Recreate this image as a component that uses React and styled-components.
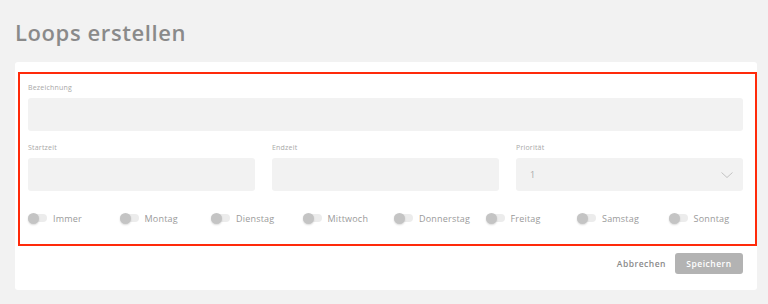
import React, { useState } from "react";
import styled, { createGlobalStyle } from "styled-components";

const GlobalStyle = createGlobalStyle`
  html, body {
    margin: 0;
    padding: 0;
    background: #f2f2f2;
  }
  body {
    font-family: "Open Sans", "Liberation Sans", sans-serif;
  }
`;

const Page = styled.div`
  width: 768px;
  height: 304px;
  padding: 18px 11px 0 15px;
  box-sizing: border-box;
`;

const Title = styled.h1`
  margin: 0 0 16px;
  font-size: 22px;
  line-height: 28px;
  font-weight: 600;
  color: #8a8a8a;
  letter-spacing: 0.6px;
`;

const Card = styled.section`
  background: #fff;
  border-radius: 3px;
  padding: 10px 0 16px 3px;
`;

const Form = styled.div`
  border: 2px solid #ff2a0a;
  padding: 9px 12px 20px 8px;
  display: flex;
  flex-direction: column;
`;

const Field = styled.div`
  display: flex;
  flex-direction: column;
`;

const Label = styled.label`
  font-size: 7px;
  line-height: 10px;
  color: #a8a8a8;
  margin-bottom: 5px;
  letter-spacing: 0.2px;
`;

const Input = styled.div`
  height: 33px;
  background: #f2f2f2;
  border-radius: 3px;
  display: flex;
  align-items: center;
  justify-content: space-between;
  padding: 0 10px 0 14px;
  font-size: 9px;
  color: #aaa;
`;

const Row = styled.div`
  display: grid;
  grid-template-columns: repeat(3, 1fr);
  column-gap: 17px;
  margin-top: 12px;
`;

const Days = styled.div`
  display: grid;
  grid-template-columns: repeat(8, 91.5px);
  margin-top: 21px;
`;

const Day = styled.div`
  display: flex;
  align-items: center;
  gap: 6px;
  height: 12px;
`;

const Track = styled.span`
  position: relative;
  width: 19px;
  height: 8px;
  border-radius: 4px;
  background: #ececec;
`;

const Knob = styled.span`
  position: absolute;
  left: 0;
  top: -1.5px;
  width: 11px;
  height: 11px;
  border-radius: 50%;
  background: #c4c4c4;
  box-shadow: 0 1px 2px rgba(0, 0, 0, 0.15);
`;

const DayLabel = styled.span`
  font-size: 9px;
  color: #9a9a9a;
  letter-spacing: 0.2px;
`;

const Footer = styled.div`
  display: flex;
  justify-content: flex-end;
  align-items: center;
  gap: 9px;
  margin-top: 7px;
  padding-right: 14px;
`;

const Cancel = styled.button`
  background: none;
  border: none;
  padding: 0;
  font-family: inherit;
  font-size: 8.5px;
  font-weight: 600;
  color: #8a8a8a;
  letter-spacing: 0.5px;
`;

const Save = styled.button`
  width: 68px;
  height: 21px;
  border: none;
  border-radius: 3px;
  background: #b3b3b3;
  color: #fff;
  font-family: inherit;
  font-size: 8.5px;
  font-weight: 600;
  letter-spacing: 0.5px;
`;

const Chevron = () => (
  <svg width="12" height="6" viewBox="0 0 12 6" fill="none">
    <path d="M0.5 0.5l5.5 5 5.5-5" stroke="#bdbdbd" strokeWidth="0.9" />
  </svg>
);

const days = ["Immer", "Montag", "Dienstag", "Mittwoch", "Donnerstag", "Freitag", "Samstag", "Sonntag"];

export default function App() {
  const [active] = useState({});
  return (
    <Page>
      <GlobalStyle />
      <Title>Loops erstellen</Title>
      <Card>
        <Form>
          <Field>
            <Label>Bezeichnung</Label>
            <Input />
          </Field>
          <Row>
            <Field>
              <Label>Startzeit</Label>
              <Input />
            </Field>
            <Field>
              <Label>Endzeit</Label>
              <Input />
            </Field>
            <Field>
              <Label>Priorität</Label>
              <Input>
                <span>1</span>
                <Chevron />
              </Input>
            </Field>
          </Row>
          <Days>
            {days.map((d) => (
              <Day key={d}>
                <Track>
                  <Knob style={{ left: active[d] ? 8 : 0 }} />
                </Track>
                <DayLabel>{d}</DayLabel>
              </Day>
            ))}
          </Days>
        </Form>
        <Footer>
          <Cancel>Abbrechen</Cancel>
          <Save>Speichern</Save>
        </Footer>
      </Card>
    </Page>
  );
}
